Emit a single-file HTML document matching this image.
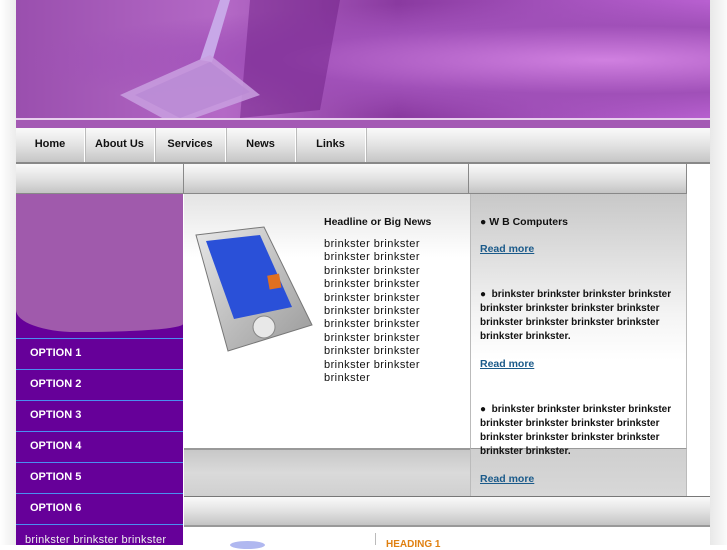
<!DOCTYPE html>
<html><head><style>
*{margin:0;padding:0;box-sizing:border-box}
body{width:727px;height:545px;overflow:hidden;background:#fff;font-family:"Liberation Sans",sans-serif;position:relative}
.a{position:absolute}
.gb{background:linear-gradient(#fafafa,#e2e2e2 50%,#c4c4c4)}
.nav div{position:absolute;top:0;height:35px;line-height:33px;text-align:center;font-size:11px;font-weight:bold;color:#111;border-right:1px solid #fff;box-shadow:1px 0 0 #bbb}
.opt{position:absolute;left:16px;width:167px;height:31px;background:#660099;border-top:1px solid #4a8ff0;color:#fff;font-size:11px;font-weight:bold;padding:8px 0 0 14px}
.txt{font-size:11px;line-height:13.4px;color:#111;letter-spacing:.45px}
.b{font-size:10px;font-weight:bold;line-height:14px;color:#111}
.h{font-size:10.5px}
.rm{font-size:10.5px;font-weight:bold;color:#1a5a8a;text-decoration:underline}
</style></head><body>
<div class="a" style="left:0;top:0;width:16px;height:545px;background:linear-gradient(90deg,#fff,#ececec)"></div>
<div class="a" style="left:710px;top:0;width:17px;height:545px;background:linear-gradient(90deg,#e8e8e8,#fafafa)"></div>
<div class="a" style="left:16px;top:0;width:694px;height:120px;background:radial-gradient(ellipse at 85% 50%,#d080e0,#a050b8 40%,transparent 70%),linear-gradient(90deg,#9a4fae,#b469c6 30%,#8a3aa0 55%,#a04fb8 75%,#b860d0)"></div>
<svg class="a" style="left:100px;top:0" width="260" height="125"><polygon points="150,0 240,0 220,110 140,118" fill="#6a1a80" opacity=".45"/><polygon points="100,60 120,0 130,0 112,62" fill="#c8a8e8"/><polygon points="20,95 110,55 160,95 75,125" fill="#c9a0e0" opacity=".85"/><polygon points="35,95 110,62 150,92 80,118" fill="#b98ad4" opacity=".8"/></svg>
<div class="a" style="left:16px;top:118px;width:694px;height:2px;background:#e8d0ee"></div>
<div class="a" style="left:16px;top:120px;width:694px;height:8px;background:#a45ab4"></div>
<div class="a gb nav" style="left:16px;top:128px;width:694px;height:35px">
<div style="left:0;width:69px">Home</div><div style="left:69px;width:70px">About Us</div><div style="left:139px;width:71px">Services</div><div style="left:210px;width:70px">News</div><div style="left:280px;width:70px">Links</div></div>
<div class="a" style="left:16px;top:162px;width:694px;height:2px;background:#888"></div>
<div class="a gb" style="left:16px;top:164px;width:167px;height:30px;border-bottom:1px solid #888"></div>
<div class="a gb" style="left:183px;top:164px;width:286px;height:30px;border-left:1px solid #888;border-bottom:1px solid #888;border-right:1px solid #888"></div>
<div class="a gb" style="left:469px;top:164px;width:218px;height:30px;border-bottom:1px solid #888;border-right:1px solid #888"></div>
<div class="a" style="left:16px;top:194px;width:167px;height:144px;background:#660099"></div>
<div class="a" style="left:16px;top:194px;width:167px;height:96px;background:#a05aac"></div>
<div class="a" style="left:16px;top:280px;width:167px;height:52px;background:#a05aac;border-radius:0 0 100px 60px/0 0 8px 22px"></div>
<div class="opt" style="top:338px">OPTION 1</div>
<div class="opt" style="top:369px">OPTION 2</div>
<div class="opt" style="top:400px">OPTION 3</div>
<div class="opt" style="top:431px">OPTION 4</div>
<div class="opt" style="top:462px">OPTION 5</div>
<div class="opt" style="top:493px">OPTION 6</div>
<div class="a" style="left:16px;top:524px;width:167px;height:21px;background:#660099;border-top:1px solid #4a8ff0;color:#eee;font-size:11px;padding:9px 0 0 9px;white-space:nowrap;letter-spacing:.3px">brinkster brinkster brinkster</div>
<div class="a" style="left:184px;top:194px;width:286px;height:254px;background:linear-gradient(#e4e4e4,#fff 25%)"></div>
<svg class="a" style="left:192px;top:225px" width="125" height="130"><defs><linearGradient id="g" x1="0" y1="0" x2="1" y2="1"><stop offset="0" stop-color="#e8e8e8"/><stop offset="1" stop-color="#999"/></linearGradient></defs><polygon points="4,10 72,2 120,100 36,126" fill="url(#g)" stroke="#777"/><polygon points="14,16 68,10 100,82 42,94" fill="#2a50d8"/><rect x="76" y="50" width="12" height="14" fill="#e07020" transform="rotate(-10 80 55)"/><circle cx="72" cy="102" r="11" fill="#e8e8e8" stroke="#888"/></svg>
<div class="a b h" style="left:324px;top:215px">Headline or Big News</div>
<div class="a txt" style="left:324px;top:238px;width:110px">brinkster brinkster brinkster brinkster brinkster brinkster brinkster brinkster brinkster brinkster brinkster brinkster brinkster brinkster brinkster brinkster brinkster brinkster brinkster brinkster brinkster</div>
<div class="a" style="left:470px;top:194px;width:217px;height:302px;background:linear-gradient(#c8c8c8,#f4f4f4 40%,#fff 55%);border-left:1px solid #bbb;border-right:1px solid #bbb"></div>
<div class="a" style="left:184px;top:448px;width:286px;height:48px;background:linear-gradient(#c8c8c8,#dadada 50%,#d0d0d0);border-top:2px solid #999"></div>
<div class="a" style="left:470px;top:448px;width:217px;height:48px;background:linear-gradient(#cfcfcf,#d8d8d8);border-left:1px solid #bbb;border-right:1px solid #bbb;border-top:1px solid #999"></div>
<div class="a b h" style="left:480px;top:215px">● W B Computers</div>
<div class="a rm" style="left:480px;top:243px">Read more</div>
<div class="a b" style="left:480px;top:288px;width:200px">● &nbsp;brinkster brinkster brinkster brinkster brinkster brinkster brinkster brinkster brinkster brinkster brinkster brinkster brinkster brinkster.</div>
<div class="a rm" style="left:480px;top:358px">Read more</div>
<div class="a b" style="left:480px;top:403px;width:200px">● &nbsp;brinkster brinkster brinkster brinkster brinkster brinkster brinkster brinkster brinkster brinkster brinkster brinkster brinkster brinkster.</div>
<div class="a rm" style="left:480px;top:473px">Read more</div>
<div class="a gb" style="left:184px;top:496px;width:526px;height:31px;border-top:1px solid #777;border-bottom:2px solid #999"></div>
<div class="a" style="left:375px;top:533px;width:1px;height:12px;background:#bbb"></div>
<div class="a" style="left:386px;top:539px;font-size:10px;font-weight:bold;color:#e08010">HEADING 1</div>
<div class="a" style="left:230px;top:541px;width:35px;height:8px;border-radius:50%;background:#b0b8f0"></div>
</body></html>
